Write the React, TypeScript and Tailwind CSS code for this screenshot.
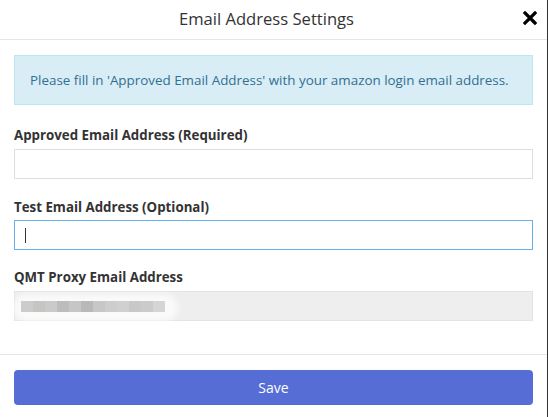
export default function App() {
  const blocks = ["#cccccc", "#c6c5c4", "#cacac8", "#bcbcbc", "#c6c6c6", "#b9b9b9", "#c7c7c5", "#cdcdcd", "#cfd0d2", "#c9c8c6", "#cbcbcb", "#d3d5d7"];
  return (
    <div className="w-[548px] h-[417px] bg-white border-r border-[#333] font-['Open_Sans',sans-serif] text-[#333] overflow-hidden">
      <div className="relative h-[40px] border-b border-[#e5e5e5] flex items-center justify-center pr-[14px]">
        <span className="text-[16.6px] text-[#333]">Email Address Settings</span>
        <span className="absolute right-[10px] top-[11px]">
          <svg width="14" height="14" viewBox="0 0 14 14">
            <path d="M2 2 L12 12 M12 2 L2 12" stroke="#000" strokeWidth="3.2" strokeLinecap="square" />
          </svg>
        </span>
      </div>
      <div className="px-[14px] pt-[15px] pb-[33px]">
        <div className="h-[50px] bg-[#d9edf7] border border-[#bce8f1] text-[#31708f] text-[13.4px] flex items-center pl-[15px]">
          Please fill in 'Approved Email Address' with your amazon login email address.
        </div>
        <div className="mt-[20px] text-[13.3px] font-bold leading-[20px]">Approved Email Address (Required)</div>
        <div className="mt-[4px] h-[30px] border border-[#dedede] bg-white"></div>
        <div className="mt-[18px] text-[13.3px] font-bold leading-[20px]">Test Email Address (Optional)</div>
        <div className="mt-[3px] h-[30px] border border-[#66afe9] bg-white flex items-center pl-[10px]">
          <div className="w-px h-[15px] bg-[#333]"></div>
        </div>
        <div className="mt-[17px] text-[13.3px] font-bold leading-[20px]">QMT Proxy Email Address</div>
        <div className="relative mt-[4px] h-[30px] border border-[#e3e3e3] bg-[#eeeeee]">
          <div className="absolute left-[-2px] top-[2px] w-[165px] h-[28px] rounded-full bg-white/70 blur-[3px]"></div>
          <div className="absolute left-[6px] top-[9px] flex">
            {blocks.map((c, i) => (
              <div key={i} className="w-[12px] h-[11px]" style={{ backgroundColor: c }}></div>
            ))}
          </div>
        </div>
      </div>
      <div className="border-t border-[#e5e5e5] px-[14px] pt-[15px]">
        <button className="w-full h-[35px] rounded-[4px] bg-[#566dd6] text-white text-[14px]">Save</button>
      </div>
    </div>
  );
}
